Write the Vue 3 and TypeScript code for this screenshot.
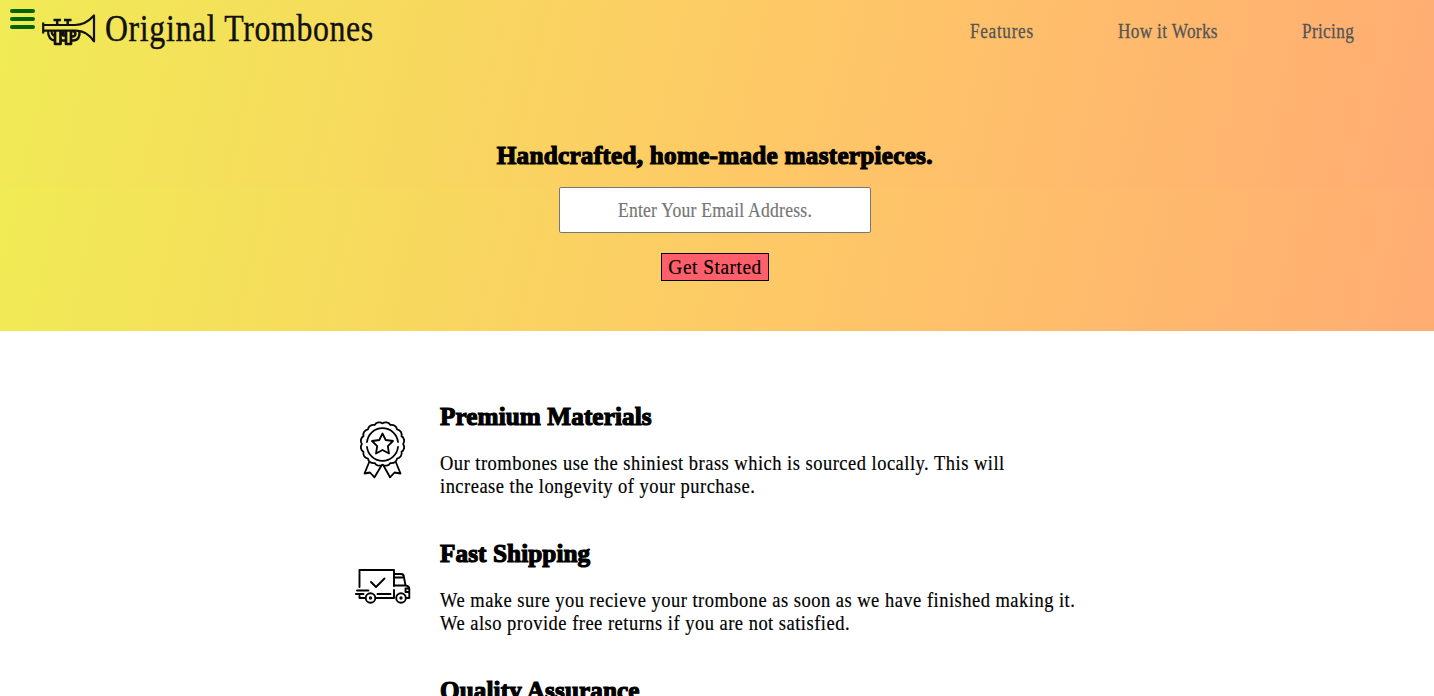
<script setup lang="ts">
interface Feature {
  title: string
  icon: 'award' | 'truck' | 'none'
  lines: string[]
}

const links: string[] = ['Features', 'How it Works', 'Pricing']
const bumps = Array.from({ length: 16 }, (_, i) => {
  const a = (i * Math.PI) / 8
  const b = ((i + 1) * Math.PI) / 8
  const p = (t: number) => `${(27.5 + 20.6 * Math.cos(t)).toFixed(2)} ${(22 + 20.6 * Math.sin(t)).toFixed(2)}`
  return `${i === 0 ? `M${p(a)}` : ''}A5.4 5.4 0 0 1 ${p(b)}`
}).join('') + 'Z'

const features: Feature[] = [
  {
    title: 'Premium Materials',
    icon: 'award',
    lines: ['Our trombones use the shiniest brass which is sourced locally. This will', 'increase the longevity of your purchase.'],
  },
  {
    title: 'Fast Shipping',
    icon: 'truck',
    lines: ['We make sure you recieve your trombone as soon as we have finished making it.', 'We also provide free returns if you are not satisfied.'],
  },
  { title: 'Quality Assurance', icon: 'none', lines: [] },
]
</script>

<template>
  <div class="page">
    <div class="hero">
      <header class="bar">
        <div class="burger"><i></i><i></i><i></i></div>
        <svg class="horn" viewBox="0 0 54 34" fill="none" stroke="#111" stroke-width="2.200" stroke-linejoin="round">
          <path d="M1.200 9.500V20.500M1 12H33C41 12 47 8 52 2.500V28.500C48 22.500 42 17.700 34 17.700H1" />
          <path d="M11.500 7H19M22 7H29.500M15.200 7V12M25.700 7V12" stroke-width="2.500" />
          <path d="M6 18C6 23 8 27 13 27.500M9.500 18C9.500 21 11 22.500 13 23" />
          <path d="M13 18V31H18.500V18M24 18V31H29V18M18 27.500H24M21.200 18V22.500H24" stroke-width="2.700" />
          <path d="M28 27.500H31C36 27.500 38 24 37.500 18M28 23.500H30.500C34.500 23.500 34.500 18 30 18" stroke-width="2.500" />
        </svg>
        <span class="brand">Original Trombones</span>
        <nav><a v-for="l in links" :key="l">{{ l }}</a></nav>
      </header>
      <section class="signup">
        <h2 class="tagline">Handcrafted, home-made masterpieces.</h2>
        <div class="field"><input type="email" placeholder="Enter Your Email Address." /></div>
        <button><span>Get Started</span></button>
      </section>
    </div>
    <main>
      <article v-for="f in features" :key="f.title">
        <div class="icon">
          <svg v-if="f.icon === 'award'" class="award" viewBox="0 0 55 56" fill="none" stroke="#000" stroke-width="1.800" stroke-linejoin="round" stroke-linecap="round">
            <path :d="bumps" />
            <path d="M12 20A15.600 15.600 0 0 1 43 20M12 25A15.600 15.600 0 0 0 43 25" />
            <path d="M27.500 11.500L30.700 18L38 19L32.800 24.200L34 31.500L27.500 28L21 31.500L22.200 24.200L17 19L24.300 18Z" />
            <path d="M14 40.500L9.500 51.500L15 50.500L19.500 55.300L26.500 43.500M28.500 43.500L35 55.300L39.500 50.500L45.500 51.500L41 40.500" />
          </svg>
          <svg v-else-if="f.icon === 'truck'" class="truck" viewBox="0 0 56 36" fill="none" stroke="#000" stroke-width="1.900" stroke-linejoin="round" stroke-linecap="round">
            <path d="M4.500 18V1H39V17M39 21V29H21M10 29H4.500V26.500M2 21.500H13.500M.9 25H8.500M22.500 25H35.500" />
            <path d="M39 5H46Q49 5 49 8.500H39M49 8.500L50.500 16.500H39M50.500 16.500Q54.300 17 54.300 20V29H51M54 19.500H50.500V23H54" />
            <path d="M16 13L21 18L29.500 9.500" />
            <circle cx="15.500" cy="29" r="4.800" /><circle cx="46" cy="29" r="4.800" />
            <circle cx="15.500" cy="29" r=".7" /><circle cx="46" cy="29" r=".7" />
          </svg>
        </div>
        <div class="copy">
          <h2>{{ f.title }}</h2>
          <p><span v-for="t in f.lines" :key="t">{{ t }}</span></p>
        </div>
      </article>
    </main>
  </div>
</template>

<style>
body { margin: 0; overflow: hidden; }
</style>

<style scoped>
.page { height: 696px; overflow: hidden; background: #fff; font-family: "Liberation Serif", serif; color: #000; }
.hero { height: 331px; background: linear-gradient(103deg, #f0eb55 0%, #fec767 56%, #ffac73 100%) 0 0 / 100% 187px; }
.bar { display: flex; align-items: flex-start; height: 62px; }
.burger { display: flex; flex-direction: column; gap: 4px; margin: 9px 0 0 10px; width: 25px; }
.burger i { height: 4px; border-radius: 2px; background: #006400; }
.horn { width: 54px; height: 34px; margin: 13px 0 0 7px; }
.brand { margin: 8px 0 0 9px; font-size: 37px; line-height: 42px; letter-spacing: 0.75px; white-space: nowrap; color: #111; transform: scaleX(0.86); transform-origin: 0 0; -webkit-text-stroke: 0.4px #111; }
nav { display: grid; grid-template-columns: 64px 100px 53px; column-gap: 84px; margin: 19px 79px 0 auto; font-size: 20px; line-height: 24px; color: #555; }
nav a { width: max-content; white-space: nowrap; letter-spacing: 0.4px; transform: scaleX(0.86); transform-origin: 0 0; -webkit-text-stroke: 0.3px #555; }
nav a:first-child { letter-spacing: 0.8px; }
.signup { display: flex; flex-direction: column; align-items: center; padding-top: 79px; margin-right: 4px; }
h2 { width: max-content; margin: 0; font: bold 26px/30px "Liberation Serif", serif; letter-spacing: 0.08px; white-space: nowrap; transform: scaleX(0.97); transform-origin: 0 0; -webkit-text-stroke: 1.2px #000; }
.tagline { letter-spacing: 0.25px; transform-origin: 50% 0; }
.field { box-sizing: border-box; display: flex; justify-content: center; width: 312px; height: 46px; margin-top: 16px; border: 1px solid #767676; border-radius: 2px; background: #fff; }
input { box-sizing: border-box; flex: none; width: 350px; padding: 0; border: 0; outline: 0; text-align: center; background: transparent; font: 20px "Liberation Serif", serif; letter-spacing: 0.27px; transform: scaleX(0.88); }
input::placeholder { color: #757575; -webkit-text-stroke: 0.2px #757575; }
button { box-sizing: border-box; display: flex; justify-content: center; width: 108px; height: 28px; margin-top: 20px; padding: 0; border: 1px solid #000; background: #ff5f6b; font: 22px/26px "Liberation Serif", serif; color: #000; white-space: nowrap; }
button span { letter-spacing: 0.6px; transform: scaleX(0.88); -webkit-text-stroke: 0.2px #000; }
main { width: 754px; margin: 0 auto; padding: 71px 0 0 9px; }
article { display: flex; height: 137px; }
.icon { box-sizing: border-box; width: 95.5px; padding-left: 10.5px; flex: none; }
.icon svg { display: block; overflow: visible; }
.award { width: 55px; height: 56px; margin-top: 20px; }
.truck { width: 56px; height: 36px; margin-top: 30px; }
p { margin: 20px 0 0; font-size: 21px; line-height: 23px; }
p span { display: block; width: max-content; white-space: nowrap; letter-spacing: 0.56px; transform: scaleX(0.88); transform-origin: 0 0; -webkit-text-stroke: 0.2px #000; }
</style>
